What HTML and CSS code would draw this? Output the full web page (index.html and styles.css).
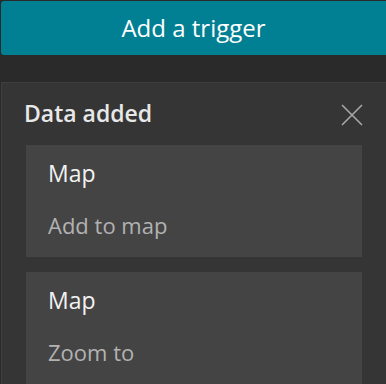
FILE: index.html
```html
<!DOCTYPE html>
<html lang="en">
<head>
  <meta charset="UTF-8" />
  <meta name="viewport" content="width=device-width, initial-scale=1" />
  <title>Triggers</title>
  <link rel="stylesheet" href="styles.css">
</head>
<body>
  <div class="top-bar">
    <button class="trigger-btn">Add a trigger</button>
  </div>

  <div class="panel">
    <div class="panel-header">
      <span class="panel-title">Data added</span>
      <svg class="close-icon" width="22" height="22" viewBox="0 0 22 22" aria-label="Close">
        <path d="M1 1 L21 21 M21 1 L1 21" stroke="#a8a8a8" stroke-width="1.6" fill="none" />
      </svg>
    </div>

    <div class="action-list">
      <div class="action-card">
        <div class="action-target">Map</div>
        <div class="action-name">Add to map</div>
      </div>
      <div class="action-card">
        <div class="action-target">Map</div>
        <div class="action-name">Zoom to</div>
      </div>
    </div>
  </div>
</body>
</html>
```

FILE: styles.css
```css
:root {
  --bg: #2a2a2a;
  --panel: #353535;
  --panel-edge: #3e3e3e;
  --card: #444444;
  --brand: #017f93;
  --text: #f2f2f2;
  --text-soft: #b2b2b2;
}

html, body {
  margin: 0;
  height: 100%;
  overflow: hidden;
}

body {
  background: var(--bg);
  font-family: "Open Sans", Lato, sans-serif;
  color: var(--text);
}

.top-bar {
  padding: 1px 0 0 1px;
}

.trigger-btn {
  display: block;
  width: calc(100% + 6px);
  height: 54px;
  border: none;
  border-radius: 3px;
  background: var(--brand);
  color: #fff;
  font-family: inherit;
  font-size: 24px;
  line-height: 52px;
  padding: 0 6px 0 0;
  text-align: center;
}

.panel {
  margin: 27px 0 0 1px;
  border-top: 1px solid var(--panel-edge);
  border-left: 1px solid var(--panel-edge);
  background: var(--panel);
  padding: 16px 24px 40px 24px;
  min-height: 400px;
}

.panel-header {
  display: flex;
  align-items: flex-start;
  justify-content: space-between;
  margin-left: -2px;
}

.panel-title {
  font-size: 23px;
  font-weight: 600;
  line-height: 28px;
  color: #e8e8e8;
}

.close-icon {
  margin-top: 5px;
  margin-right: -1px;
}

.action-list {
  display: flex;
  flex-direction: column;
  gap: 15px;
  margin-top: 18px;
}

.action-card {
  background: var(--card);
  padding: 14px 22px 18px 22px;
}

.action-target {
  font-size: 23px;
  line-height: 28px;
  color: var(--text);
}

.action-name {
  font-size: 22px;
  line-height: 28px;
  margin-top: 24px;
  color: var(--text-soft);
}
```
